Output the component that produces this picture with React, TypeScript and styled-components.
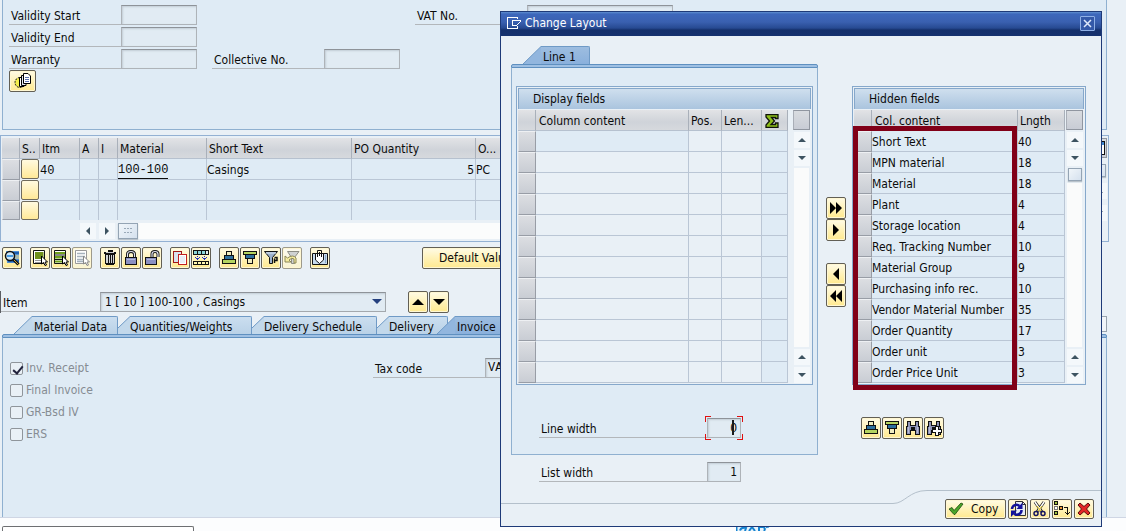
import React from "react";
import styled, { createGlobalStyle, css } from "styled-components";

const GlobalStyle = createGlobalStyle`
  * { box-sizing: border-box; }
  html, body { margin: 0; padding: 0; }
  body { background: #fcfdfe; overflow: hidden; }
  body, button, input, select, table {
    font-family: "DejaVu Sans Condensed", "DejaVu Sans", sans-serif;
    font-size: 12px;
    line-height: 16px;
    color: #0b0b0b;
  }
  button, input, select { margin: 0; padding: 0; border-radius: 0; }
`;

/* ---------- page ---------- */

const Page = styled.main`
  min-height: 100vh;
  display: flex;
  flex-direction: column;
  position: relative;
`;

const Workspace = styled.div`
  flex: 1;
  display: flex;
  flex-direction: column;
  background: #e9f0f6;
  padding-right: 17px;
  border-bottom: 1px solid #cfd6e4;
`;

const HeaderPanel = styled.section`
  min-height: 130px;
  margin: 0 2px 0 2px;
  padding: 5px 6px 0;
  background: #dfebf5;
  border: 1px solid #8fb0d0;
  border-top: 0;
`;

const HeaderGrid = styled.div`
  display: grid;
  grid-template-columns: 188px 188px 258px;
  column-gap: 15px;
  row-gap: 2px;
  margin-bottom: 1px;
`;

const Field = styled.label<{ $column?: number }>`
  display: flex;
  height: 20px;
  ${(p) => p.$column && css`grid-column: ${p.$column};`}
`;

const FieldText = styled.span<{ $width?: number }>`
  width: ${(p) => p.$width ?? 112}px;
  flex: none;
  padding: 3px 0 0 2px;
  border-bottom: 1px solid #b3b7bb;
`;

const TextBox = styled.input<{ $width?: number; $numeric?: boolean }>`
  width: ${(p) => p.$width ?? 76}px;
  height: 20px;
  border: 1px solid #aeb3b8;
  border-top-color: #8e9399;
  background: #e1ebf3;
  box-shadow: inset 1px 1px 2px #c3cdd6;
  padding: 0 2px;
  outline: none;
  ${(p) => p.$numeric && css`text-align: right; padding-right: 3px;`}
`;

const MonoBox = styled(TextBox)`
  font-family: "Liberation Mono", monospace;
`;

const Button = styled.button<{ $width?: number; $height?: number; $muted?: boolean }>`
  display: inline-flex;
  align-items: center;
  justify-content: center;
  flex: none;
  width: ${(p) => p.$width ?? 20}px;
  height: ${(p) => p.$height ?? 22}px;
  border: 1px solid ${(p) => (p.$muted ? "#9d9a8c" : "#625f55")};
  border-radius: 2px;
  background: linear-gradient(#fffbe6, #fff2b8 50%, #ffe98f);
  box-shadow: inset 0 0 0 1px #fff7d2;
  ${(p) => p.$muted && css`background: linear-gradient(#fcfaf0, #f9f3d0);`}
  svg { display: block; flex: none; }
`;

/* ---------- item grid ---------- */

const ItemPanel = styled.section`
  display: flex;
  margin-top: 5px;
  padding: 2px 1px 2px;
  border: 1px solid #93b1d3;
`;

const ItemMain = styled.div`
  flex: 1;
  min-width: 0;
`;

const Grid = styled.table`
  width: 100%;
  table-layout: fixed;
  border-collapse: separate;
  border-spacing: 0;
`;

const Th = styled.th<{ $pad?: number }>`
  height: 21px;
  padding: 2px 0 0 ${(p) => p.$pad ?? 2}px;
  text-align: left;
  font-weight: normal;
  white-space: nowrap;
  overflow: hidden;
  background: linear-gradient(#e2e3e6, #cfd3d9 60%, #d6d9dd);
  border-right: 1px solid #a9b0ba;
  border-bottom: 1px solid #b6c1cf;
  svg { display: block; }
`;

const Td = styled.td<{ $fill?: string; $right?: boolean; $short?: boolean }>`
  height: ${(p) => (p.$short ? 19 : 21)}px;
  padding: ${(p) => (p.$short ? 0 : 2)}px 1px 0 0;
  white-space: nowrap;
  overflow: hidden;
  background: ${(p) => p.$fill ?? "#dfebf5"};
  border-right: 1px solid #bac6d5;
  border-bottom: ${(p) => (p.$short ? "0" : "1px solid #bac6d5")};
  text-align: ${(p) => (p.$right ? "right" : "left")};
`;

const Handle = styled.td`
  padding: 0;
  border: 1px solid #989da6;
  border-top-color: #eef0f3;
  border-left-color: #dfe2e6;
  background: linear-gradient(#dcdee2, #c9cdd4);
`;

const MarkCell = styled.td`
  padding: 0 0 0 1px;
  vertical-align: top;
`;

const Marker = styled.button<{ $short?: boolean }>`
  display: block;
  width: 18px;
  height: ${(p) => (p.$short ? 19 : 20)}px;
  border: 1px solid #6f6b5d;
  border-radius: 2px;
  background: linear-gradient(#fffae0, #ffe998);
`;

const Mono = styled.span`
  font-family: "Liberation Mono", monospace;
`;

const MaterialLink = styled.a`
  display: inline-block;
  line-height: 15px;
  font-family: "Liberation Mono", monospace;
  font-size: 12px;
  color: #0b0b0b;
  text-decoration: none;
  border-bottom: 1px solid #0b0b0b;
`;

const HorizontalScroll = styled.div`
  display: flex;
  gap: 3px;
  height: 16px;
  margin: 3px 0 0 78px;
`;

const ScrollArrow = styled.button`
  display: flex;
  align-items: center;
  justify-content: center;
  flex: none;
  width: 16px;
  height: 16px;
  border: 0;
  background: #f4f8fb;
`;

const ScrollTrack = styled.div`
  flex: 1;
  background: #fbfcfc;
`;

const ScrollThumb = styled.div<{ $width: number; $height: number }>`
  display: flex;
  align-items: center;
  justify-content: center;
  flex: none;
  width: ${(p) => p.$width}px;
  height: ${(p) => p.$height}px;
  border: 1px solid #94a4b4;
  background: linear-gradient(135deg, #f1f6fa, #d5e1ee);
  box-shadow: 0 1px 1px #b9c2ca;
`;

const ConfigButton = styled.button`
  width: 17px;
  height: 20px;
  flex: none;
  display: flex;
  align-items: center;
  justify-content: center;
  border: 1px solid #9096a0;
  border-left-color: #a9aeb7;
  background: linear-gradient(#d9dce0, #c8ccd5);
`;

const VerticalScroll = styled.div<{ $gap?: number }>`
  display: flex;
  flex-direction: column;
  align-items: center;
  flex: none;
  width: 17px;
  gap: ${(p) => p.$gap ?? 2}px;
`;

/* ---------- toolbar and item picker ---------- */

const Toolbar = styled.div`
  display: flex;
  gap: 8px;
  margin: 5px 0 0 2px;
`;

const ButtonGroup = styled.div`
  display: flex;
  gap: 1px;
`;

const WideAction = styled(Button)`
  margin-left: 84px;
`;

const ItemRow = styled.div`
  display: flex;
  align-items: center;
  margin-top: 22px;
  height: 22px;
  border-left: 1px solid #5b5e63;
`;

const SelectWrap = styled.span`
  position: relative;
  width: 286px;
  height: 20px;
  svg { position: absolute; right: 4px; top: 7px; pointer-events: none; }
`;

const Select = styled.select`
  appearance: none;
  width: 100%;
  height: 20px;
  padding: 0 4px;
  border: 1px solid #a3a8ad;
  border-top-color: #8e9399;
  background: #e1ebf3;
  box-shadow: inset 1px 1px 2px #c3cdd6;
`;

const ItemLabel = styled.label`
  display: flex;
  height: 20px;
`;

const StepButtons = styled.div`
  display: flex;
  gap: 1px;
  margin-left: 22px;
`;

/* ---------- tabs ---------- */

const TabStrip = styled.div<{ $indent: number }>`
  display: flex;
  height: 18px;
  padding-left: ${(p) => p.$indent}px;
`;

const TabButton = styled.button<{ $overlap?: boolean }>`
  display: flex;
  height: 18px;
  border: 0;
  background: none;
  position: relative;
  ${(p) => p.$overlap && css`margin-left: -11px;`}
  svg { display: block; flex: none; }
`;

const TabFace = styled.span<{ $active?: boolean; $width: number; $pad?: number }>`
  width: ${(p) => p.$width}px;
  height: 18px;
  padding: 3px 0 0 ${(p) => p.$pad ?? 0}px;
  line-height: 15px;
  text-align: left;
  white-space: nowrap;
  border-top: 1px solid #6f9ac6;
  border-right: 1px solid #6f9ac6;
  border-top-right-radius: 2px;
  background: ${(p) => (p.$active ? "linear-gradient(#9dbde0, #8ab0dc)" : "linear-gradient(#cbdeef, #b9d1e7)")};
`;

const StripEnd = styled.div`
  flex: 1;
  display: flex;
  justify-content: flex-end;
`;

const TabListButton = styled.button`
  width: 16px;
  height: 16px;
  border: 1px solid #98a3ae;
  background: #f1f5f9;
`;

const TabBand = styled.div`
  height: 4px;
  border: 1px solid #5f90c0;
  border-radius: 2px 2px 0 0;
  background: #9fc0e3;
`;

const TabPanel = styled.div`
  flex: 1;
  background: #dfebf5;
  border: 1px solid #8fb0d0;
  border-top: 0;
`;

const TabArea = styled.section`
  flex: 1;
  display: flex;
  flex-direction: column;
  margin: 3px 2px 0 2px;
`;

const InvoicePanel = styled(TabPanel)`
  border-bottom: 0;
  display: grid;
  grid-template-columns: 363px 1fr;
  align-items: start;
  padding: 20px 0 0 7px;
`;

const Checks = styled.div`
  display: flex;
  flex-direction: column;
  gap: 2px;
`;

const CheckLabel = styled.label`
  display: flex;
  align-items: center;
  gap: 3px;
  height: 20px;
  color: #868c93;
`;

const CheckBox = styled.input`
  appearance: none;
  width: 13px;
  height: 13px;
  border: 1px solid #8f959b;
  border-radius: 2px;
  background: #e9f0f6;
  position: relative;
  &:checked::after {
    content: "";
    position: absolute;
    left: 4px;
    top: 1px;
    width: 4px;
    height: 8px;
    border: solid #20213c;
    border-width: 0 2px 2px 0;
    transform: rotate(40deg);
  }
`;

const StatusBar = styled.footer`
  height: 13px;
  display: flex;
  justify-content: space-between;
  align-items: flex-end;
  padding: 0 356px 0 2px;
  overflow: hidden;
`;

const StatusBox = styled.div`
  width: 192px;
  height: 5px;
  border: 1px solid #6d6f72;
  border-bottom: 0;
  border-radius: 2px 2px 0 0;
  background: #fff;
`;

/* ---------- dialog ---------- */

const Dialog = styled.section`
  position: absolute;
  left: 500px;
  top: 11px;
  width: 602px;
  background: #e9f0f6;
  border: 1px solid #1e3a78;
  display: flex;
  flex-direction: column;
`;

const TitleBar = styled.header`
  display: flex;
  align-items: center;
  height: 24px;
  padding: 0 6px 2px 6px;
  gap: 3px;
  background: linear-gradient(#5f8fd0 0, #3d67bb 2px, #3a60b0 10px, #274a92 16px, #15306b 18px, #16326f);
  h1 {
    flex: 1;
    margin: 0;
    font-size: 12px;
    font-weight: normal;
    color: #fff;
  }
`;

const CloseButton = styled.button`
  display: flex;
  align-items: center;
  justify-content: center;
  width: 15px;
  height: 15px;
  border: 1px solid #8fb0e6;
  border-radius: 1px;
  background: #3459a8;
`;

const DialogBody = styled.div`
  display: flex;
  padding: 10px 0 0 10px;
`;

const LineColumn = styled.div`
  width: 307px;
`;

const LinePanel = styled(TabPanel)`
  padding: 18px 4px 16px;
`;

const FieldBox = styled.div`
  border: 1px solid #86a8cb;
  padding: 1px 1px 1px 1px;
  background: #e9f0f6;
`;

const BoxTitle = styled.h2`
  margin: 0;
  height: 21px;
  padding: 3px 0 0 14px;
  font-size: 12px;
  line-height: 15px;
  font-weight: normal;
  border: 1px solid #86a8cb;
  border-bottom: 0;
  background: linear-gradient(#cfdfee, #aac4de);
`;

const BoxContent = styled.div`
  display: flex;
  justify-content: space-between;
  padding: 1px 1px 0 0;
`;

const BoxTable = styled(Grid)<{ $width: number }>`
  width: ${(p) => p.$width}px;
  flex: none;
`;

const Track = styled.div`
  flex: 1;
  width: 15px;
  background: #fafbfb;
`;

const WidthField = styled(Field)<{ $top: number; $indent: number }>`
  margin-top: ${(p) => p.$top}px;
  padding-left: ${(p) => p.$indent}px;
`;

const FocusFrame = styled.span`
  position: relative;
  display: flex;
  > svg { position: absolute; left: -2px; top: -2px; pointer-events: none; }
`;

const MoveColumn = styled.div`
  display: flex;
  flex-direction: column;
  gap: 22px;
  padding-top: 151px;
  margin: 0 6px 0 8px;
`;

const MovePair = styled.div`
  display: flex;
  flex-direction: column;
`;

const HiddenColumn = styled.div`
  width: 234px;
  padding-top: 40px;
`;

const HiddenFrame = styled.div`
  position: relative;
`;

const Highlight = styled.div`
  position: absolute;
  left: 1px;
  top: 40px;
  width: 164px;
  height: 264px;
  border: 5px solid #810018;
  pointer-events: none;
`;

const ListButtons = styled(ButtonGroup)`
  margin: 32px 0 0 9px;
`;

const DialogFooter = styled.footer`
  display: flex;
  margin-top: 8px;
  svg { display: block; }
`;

const FooterLine = styled.div`
  flex: 1;
  margin-top: 13px;
  border-top: 1px solid #b4c0cb;
`;

const FooterButtons = styled.div`
  display: flex;
  gap: 2px;
  height: 36px;
  padding: 8px 7px 0 18px;
  border-top: 1px solid #b4c0cb;
`;

const CopyButton = styled(Button)`
  justify-content: flex-start;
  padding-left: 2px;
  gap: 7px;
`;

/* ---------- icons ---------- */

const Svg = ({ w = 16, h = 16, children, soft }: { w?: number; h?: number; children: React.ReactNode; soft?: boolean }) => (
  <svg width={w} height={h} viewBox={`0 0 ${w} ${h}`} aria-hidden="true" fill="none" shapeRendering={soft ? "auto" : "crispEdges"}>
    {children}
  </svg>
);

const Triangle = ({ dir, color = "#000", size = 5 }: { dir: "up" | "down" | "left" | "right"; color?: string; size?: number }) => {
  const s = size;
  const long = s * 2;
  const d = {
    up: `M0 ${s}L${s} 0L${long} ${s}Z`,
    down: `M0 0L${long} 0L${s} ${s}Z`,
    left: `M${s} 0L${s} ${long}L0 ${s}Z`,
    right: `M0 0L${s} ${s}L0 ${long}Z`,
  }[dir];
  const flat = dir === "up" || dir === "down";
  return <Svg soft w={flat ? long : s} h={flat ? s : long}><path d={d} fill={color} /></Svg>;
};

const DoubleTriangle = ({ dir }: { dir: "left" | "right" }) => (
  <Svg soft w={12} h={12}>
    <path d={dir === "right" ? "M0 0L6 6L0 12ZM6 0L12 6L6 12Z" : "M12 0L6 6L12 12ZM6 0L0 6L6 12Z"} fill="#000" />
  </Svg>
);

const DocumentsIcon = () => (
  <Svg soft w={18}>
    <circle cx="6" cy="9.500" r="5" fill="#f4ee4c" stroke="#111" strokeDasharray="2 1" />
    <path d="M5.500 4.500H10V13.500H5.500Z" fill="#fff" stroke="#000" />
    <path d="M7.500 2.500H12V12.500H7.500Z" fill="#e4e8f4" stroke="#000" />
    <path d="M9.500 .5H14L16.500 3V10.500H9.500Z" fill="#fff" stroke="#000" />
    <path d="M11 4.500H15M11 6.500H15M11 8.500H15" stroke="#5a70b0" />
  </Svg>
);

const DetailIcon = () => (
  <Svg soft>
    <path d="M2 1H15V13H3Z" fill="#4f8fd4" />
    <path d="M4 3H15M4 11H15" stroke="#1e5fae" strokeWidth="2" />
    <path d="M11 6H15M11 8H15" stroke="#ffe68b" />
    <circle cx="6" cy="6" r="4.500" fill="#cfe8f8" stroke="#101010" strokeWidth="1.500" />
    <path d="M3 6H9" stroke="#469be0" strokeWidth="2" />
    <path d="M9.500 9.500L14.500 14.500" stroke="#111" strokeWidth="3" />
    <path d="M10 10L14 14" stroke="#c8a53e" />
  </Svg>
);

const Cursor = ({ pale }: { pale?: boolean }) => (
  <path d="M9.500 6V14L11.500 12.500L13 15.500L14.500 15L13 12H15.500Z" fill="#fff" stroke={pale ? "#888" : "#000"} strokeWidth="1" />
);

const SelectAllIcon = () => (
  <Svg soft>
    <path d="M1.500 .5H12.500V13.500H1.500Z" fill="#fff" stroke="#111" />
    <path d="M3 2H11.500V9H3Z" fill="#70901c" />
    <path d="M3 10.500H10M3 12.500H10" stroke="#999" />
    <Cursor />
  </Svg>
);

const SelectBlockIcon = () => (
  <Svg soft>
    <path d="M1.500 .5H12.500V13.500H1.500Z" fill="#fff" stroke="#111" />
    <path d="M2 2H12V4H2ZM2 6H12V8.500H2ZM2 10.500H12V12.500H2Z" fill="#70a01c" />
    <path d="M2 5H12M2 9.500H12" stroke="#111" />
    <Cursor />
  </Svg>
);

const DeselectIcon = () => (
  <Svg soft>
    <path d="M1.500 .5H12.500V13.500H1.500Z" fill="#fff" stroke="#999" />
    <path d="M3 3.500H11M3 6.500H11M3 9.500H11M3 11.500H11" stroke="#a6b2bd" strokeWidth="1.500" />
    <Cursor pale />
  </Svg>
);

const TrashIcon = () => (
  <Svg>
    <path d="M6 0H11V2H14V4H2V2H6Z" fill="#111" />
    <path d="M4 2H12V3H4Z" fill="#c7c9cd" />
    <path d="M3 4H13V14H12V15H4V14H3Z" fill="#111" />
    <path d="M4 5H6V13H4ZM7 5H8V13H7ZM9 5H10V13H9ZM11 5H12V13H11Z" fill="#d2d4d8" />
  </Svg>
);

const LockIcon = ({ open }: { open?: boolean }) => {
  const shackle = open
    ? "M8 8V4Q8 1.500 11 1.500Q14 1.500 14 4V7"
    : "M4.500 8V4.500Q4.500 1.500 8 1.500Q11.500 1.500 11.500 4.500V8";
  return (
    <Svg soft>
      <path d={shackle} stroke="#111" strokeWidth="3" />
      <path d={shackle} stroke="#dfe2f2" strokeWidth="1.200" />
      <rect x={open ? 1.5 : 2.5} y="7.500" width="11" height="7" fill="#8b90c2" stroke="#111" />
      <path d={open ? "M3 9.500H11" : "M4 9.500H12"} stroke="#b4b9de" />
    </Svg>
  );
};

const CopyIcon = () => (
  <Svg>
    <rect x="1.500" y="1.500" width="8" height="11" fill="#d9e2ef" stroke="#a01818" />
    <rect x="6.500" y="4.500" width="8" height="10" fill="#fff" stroke="#c22020" />
    <path d="M8 6H13V13H8Z" fill="#e8edf5" />
  </Svg>
);

const InsertLinesIcon = () => (
  <Svg>
    <path d="M0 0H16V5H0Z" fill="#111" />
    <path d="M1 1H4V4H1ZM5 1H8V4H5ZM9 1H12V4H9Z" fill="#8dd4d8" />
    <path d="M13 1H15V4H13Z" fill="#e0eef2" />
    <path d="M4 6H5V7H4ZM2 7H3V8H2ZM6 7H7V8H6ZM3 8H6V9H3ZM4 9H5V10H4ZM11 6H12V7H11ZM9 7H10V8H9ZM13 7H14V8H13ZM10 8H13V9H10ZM11 9H12V10H11Z" fill="#2030c0" />
    <path d="M0 11H16V15H0Z" fill="#111" />
    <path d="M1 12H4V14H1ZM5 12H8V14H5ZM9 12H12V14H9ZM13 12H15V14H13Z" fill="#fff6b0" />
  </Svg>
);

const SortIcon = ({ down }: { down?: boolean }) => (
  <Svg>
    {down ? (
      <>
        <path d="M1 1H15V5H13V9H11V14H5V9H3V5H1Z" fill="#111" />
        <path d="M2 2H14V4H2Z" fill="#b4d460" />
        <path d="M4 5H12V8H4Z" fill="#2d6f9e" />
        <path d="M6 9H10V13H6Z" fill="#f0ecc0" />
      </>
    ) : (
      <>
        <path d="M5 1H11V5H13V9H15V14H1V9H3V5H5Z" fill="#111" />
        <path d="M6 2H10V5H6Z" fill="#f0ecc0" />
        <path d="M4 6H12V9H4Z" fill="#2d6f9e" />
        <path d="M2 10H14V13H2Z" fill="#b4d460" />
      </>
    )}
  </Svg>
);

const FilterIcon = () => (
  <Svg soft>
    <path d="M1.500 1.500H14.500L9.500 7.500V13.500H6.500V7.500Z" fill="#9db1cc" stroke="#111" />
    <path d="M3 3H13" stroke="#dbe5f1" />
    <path d="M11.500 13V8.500M11.500 7.500H14V10.500H12" stroke="#111" strokeWidth="1.500" />
  </Svg>
);

const FilterUndoIcon = () => (
  <Svg soft>
    <path d="M3.500 1.500H15L10.500 7.500V13.500H7.500V7.500Z" fill="#cfd2d2" stroke="#8c8c84" />
    <path d="M1 6V12H7L5 10Q8 7 10 9V13H12V8Q9 4 3.500 8Z" fill="#f5eda0" stroke="#8c8757" />
  </Svg>
);

const NotesIcon = () => (
  <Svg soft>
    <path d="M.5 3.500H15.500V14.500H.5Z" fill="#c9dced" stroke="#111" />
    <path d="M3.500 3.500H11.500V10L7.500 13.500L3.500 10Z" fill="#fff" stroke="#111" />
    <path d="M5.500 7V.5H9.500V7M7.500 2V6" stroke="#111" />
    <path d="M13.500 5V13" stroke="#8aa8c8" />
  </Svg>
);

const BinocularsIcon = ({ plus }: { plus?: boolean }) => (
  <Svg>
    <path d="M2 1H6V5H10V1H14V6H15V15H10V11H6V15H1V6H2Z" fill="#111" />
    <path d="M3 2H5V6H11V2H13V7H14V14H11V10H10V7H6V10H5V14H2V7H3Z" fill="#8f94b8" />
    <path d="M3 7H4V13H3ZM12 7H13V13H12Z" fill="#b9bddb" />
    {plus && <path d="M9.500 6.500H12.500V9.500H15.500V12.500H12.500V15.500H9.500V12.500H6.500V9.500H9.500Z" fill="#fff" stroke="#111" />}
  </Svg>
);

const SigmaIcon = () => (
  <Svg soft w={14} h={14}>
    <path d="M1 .5H13V4.500H10.500V3.500H6.500L9.500 7L6 10.500H10.500V9H13V13.500H1V11L4.500 7L1 3Z" fill="#8fc01a" stroke="#10140a" strokeWidth="1.300" />
  </Svg>
);

const CheckIcon = () => (
  <Svg soft>
    <path d="M1 8L4 6.500L6 9.500L13 2L15 3L7 13.500H6Z" fill="#4ba62a" stroke="#1c4a0e" strokeWidth=".8" />
  </Svg>
);

const RefreshIcon = () => (
  <Svg soft>
    <path d="M5.500 .5H12.500L15.500 3.500V14.500H5.500Z" fill="#e6edf6" stroke="#333" />
    <path d="M12.500 .5V3.500H15.500" stroke="#333" />
    <path d="M2 8A4.500 4.500 0 0 1 9.500 5M11.500 9A4.500 4.500 0 0 1 4 12.500" stroke="#12129a" strokeWidth="2.500" />
    <path d="M12.500 1.500V8H6.500Z" fill="#12129a" />
    <path d="M1 16V9.500H7Z" fill="#12129a" />
  </Svg>
);

const ScissorsIcon = () => (
  <Svg soft>
    <path d="M3 1L10 11M12 1L5 11" stroke="#222" strokeWidth="3" />
    <path d="M3 1L9 10M12 1L6 10" stroke="#fff" strokeWidth="1.500" />
    <path d="M5 5L9 10M10 5L6 10" stroke="#e4c51c" />
    <circle cx="4" cy="12.500" r="2" stroke="#161660" strokeWidth="1.500" />
    <circle cx="11" cy="12.500" r="2" stroke="#161660" strokeWidth="1.500" />
  </Svg>
);

const TransferIcon = () => (
  <Svg>
    <rect x=".5" y=".5" width="3" height="3" fill="#9ec33c" stroke="#111" />
    <rect x=".5" y="5.500" width="3" height="3" fill="#fff" stroke="#777" />
    <rect x=".5" y="10.500" width="3" height="3" fill="#9ec33c" stroke="#111" />
    <rect x="5.500" y="5.500" width="3" height="3" fill="#f29b38" stroke="#111" />
    <path d="M10 6.500H13.500V14M11 11.500H12M12 12.500H15M15 11.500H16" stroke="#111" />
  </Svg>
);

const CancelIcon = () => (
  <Svg soft w={14} h={14}>
    <path d="M1 3L3 1L7 4.500L11 1L13 3L9.500 7L13 11L11 13L7 9.500L3 13L1 11L4.500 7Z" fill="#e32626" stroke="#5c0c0c" />
  </Svg>
);

const WindowIcon = () => (
  <Svg w={15} h={12}>
    <path d="M10.500 2V.5H.5V11.500H10.500V9" stroke="#fff" />
    <path d="M14 3.500H5.500V8.500H10M13 4.500H14M12 5.500H13M11 6.500H12M10 7.500H11" stroke="#fff" />
  </Svg>
);

const CloseIcon = () => (
  <Svg soft w={9} h={9}>
    <path d="M1 1L8 8M8 1L1 8" stroke="#dfe9fb" strokeWidth="1.500" />
  </Svg>
);

const FocusCorners = () => (
  <Svg w={38} h={24}>
    <path d="M.5 6V.5H6M32 .5H37.500V6M37.500 18V23.500H32M6 23.500H.5V18" stroke="#e01010" />
    <path d="M27 4H29V19H27Z" fill="#1a1a1a" />
  </Svg>
);

const GripIcon = () => (
  <Svg w={8} h={6}>
    <path d="M0 .5H2M3 .5H5M6 .5H8M0 4.500H2M3 4.500H5M6 4.500H8" stroke="#9aa9b8" />
  </Svg>
);

const ConfigIcon = () => (
  <Svg w={13} h={14}>
    <rect x=".5" y=".5" width="12" height="13" fill="#fff" stroke="#111" />
    <path d="M1 1H12V4H1Z" fill="#3f86cf" />
    <path d="M4.500 4V13M8.500 4V13" stroke="#8b949e" />
  </Svg>
);

const Logo = () => (
  <Svg soft w={34} h={5}>
    <path d="M0 0H34L29 5H0Z" fill="#e8f4fc" />
    <path d="M.5 5V.5M4 4.500Q5 1 10 2L9 5M13 5L16 1L19 5M23 5V1H27Q30 2 28 5M30 1L33 .5" stroke="#1583d0" strokeWidth="2" />
  </Svg>
);

const Slant = ({ width, active }: { width: number; active?: boolean }) => {
  const drop = Math.min(width, 18);
  return (
    <Svg soft w={width} h={18}>
      <path d={`M0 18V${drop}L${width} .5V18Z`} fill={active ? "#92b6de" : "#c2d8eb"} />
      <path d={`M0 ${drop}L${width} .5`} stroke="#6f9ac6" />
    </Svg>
  );
};

/* ---------- parts ---------- */

type TabProps = { label: string; slant: number; width: number; pad?: number; active?: boolean; overlap?: boolean };

const Tab = ({ label, slant, width, pad, active, overlap }: TabProps) => (
  <TabButton type="button" role="tab" aria-selected={!!active} $overlap={overlap}>
    <Slant width={slant} active={active} />
    <TabFace $width={width} $pad={pad} $active={active}>{label}</TabFace>
  </TabButton>
);

const Arrow = ({ dir, label }: { dir: "up" | "down" | "left" | "right"; label: string }) => (
  <ScrollArrow type="button" aria-label={label}><Triangle dir={dir} size={4} color="#3d5361" /></ScrollArrow>
);

const FieldScroll = ({ thumb }: { thumb?: boolean }) => (
  <VerticalScroll>
    <ConfigButton type="button" aria-label="Configure columns" />
    <Arrow dir="up" label="First" />
    <Arrow dir="down" label="Page down" />
    {thumb && <ScrollThumb $width={14} $height={13} />}
    <Track />
    <Arrow dir="up" label="Page up" />
    <Arrow dir="down" label="Last" />
  </VerticalScroll>
);

const ItemScroll = () => (
  <VerticalScroll $gap={6}>
    <ConfigButton type="button" aria-label="Configure columns"><ConfigIcon /></ConfigButton>
    <ScrollThumb $width={15} $height={13} />
    <Arrow dir="up" label="Page up" />
    <Arrow dir="down" label="Page down" />
  </VerticalScroll>
);

const toolbarGroups: { label: string; icon: React.ReactNode; muted?: boolean }[][] = [
  [{ label: "Details", icon: <DetailIcon /> }],
  [
    { label: "Select all", icon: <SelectAllIcon /> },
    { label: "Select block", icon: <SelectBlockIcon /> },
    { label: "Deselect all", icon: <DeselectIcon />, muted: true },
  ],
  [
    { label: "Delete", icon: <TrashIcon /> },
    { label: "Lock", icon: <LockIcon /> },
    { label: "Unlock", icon: <LockIcon open /> },
  ],
  [
    { label: "Copy item", icon: <CopyIcon /> },
    { label: "Insert lines", icon: <InsertLinesIcon /> },
  ],
  [
    { label: "Sort ascending", icon: <SortIcon /> },
    { label: "Sort descending", icon: <SortIcon down /> },
    { label: "Filter", icon: <FilterIcon /> },
    { label: "Remove filter", icon: <FilterUndoIcon />, muted: true },
  ],
  [{ label: "Notes", icon: <NotesIcon /> }],
];

const hiddenFields: [string, number][] = [
  ["Short Text", 40],
  ["MPN material", 18],
  ["Material", 18],
  ["Plant", 4],
  ["Storage location", 4],
  ["Req. Tracking Number", 10],
  ["Material Group", 9],
  ["Purchasing info rec.", 10],
  ["Vendor Material Number", 35],
  ["Order Quantity", 17],
  ["Order unit", 3],
  ["Order Price Unit", 3],
];

const Columns = ({ widths, fluid }: { widths: number[]; fluid?: boolean }) => (
  <colgroup>
    {widths.map((w, i) => <col key={i} width={w} />)}
    {fluid && <col />}
  </colgroup>
);

const PurchaseOrder = () => (
  <Workspace>
    <HeaderPanel>
      <HeaderGrid>
        <Field><FieldText>Validity Start</FieldText><TextBox /></Field>
        <Field $column={3}><FieldText>VAT No.</FieldText><TextBox $width={146} /></Field>
        <Field $column={1}><FieldText>Validity End</FieldText><TextBox /></Field>
        <Field $column={1}><FieldText>Warranty</FieldText><TextBox /></Field>
        <Field><FieldText>Collective No.</FieldText><TextBox /></Field>
      </HeaderGrid>
      <Button type="button" $width={27} aria-label="Texts"><DocumentsIcon /></Button>
    </HeaderPanel>

    <ItemPanel>
      <ItemMain>
        <Grid>
          <Columns widths={[18, 20, 40, 19, 19, 89, 145, 124, 30]} fluid />
          <thead>
            <tr>
              <Th />
              <Th>S..</Th>
              <Th>Itm</Th>
              <Th>A</Th>
              <Th>I</Th>
              <Th>Material</Th>
              <Th>Short Text</Th>
              <Th>PO Quantity</Th>
              <Th>O...</Th>
              <Th />
            </tr>
          </thead>
          <tbody>
            <tr>
              <Handle />
              <MarkCell><Marker type="button" aria-label="Status of item 40" /></MarkCell>
              <Td><Mono>40</Mono></Td>
              <Td /><Td />
              <Td><MaterialLink href="#material">100-100</MaterialLink></Td>
              <Td>Casings</Td>
              <Td $right>5</Td>
              <Td>PC</Td>
              <Td />
            </tr>
            {[false, true].map((short, i) => (
              <tr key={i}>
                <Handle />
                <MarkCell><Marker type="button" aria-label="Status" $short={short} /></MarkCell>
                {Array.from({ length: 8 }, (_, c) => <Td key={c} $short={short} />)}
              </tr>
            ))}
          </tbody>
        </Grid>
        <HorizontalScroll>
          <Arrow dir="left" label="Scroll left" />
          <Arrow dir="right" label="Scroll right" />
          <ScrollTrack><ScrollThumb $width={20} $height={16}><GripIcon /></ScrollThumb></ScrollTrack>
        </HorizontalScroll>
      </ItemMain>
      <ItemScroll />
    </ItemPanel>

    <Toolbar>
      {toolbarGroups.map((group, i) => (
        <ButtonGroup key={i}>
          {group.map((b) => (
            <Button key={b.label} type="button" aria-label={b.label} $muted={b.muted}>{b.icon}</Button>
          ))}
        </ButtonGroup>
      ))}
      <WideAction type="button" $width={112}>Default Values</WideAction>
    </Toolbar>

    <ItemRow>
      <ItemLabel>
        <FieldText $width={99}>Item</FieldText>
        <SelectWrap>
          <Select><option>1 [ 10 ] 100-100 , Casings</option></Select>
          <Triangle dir="down" color="#24407e" />
        </SelectWrap>
      </ItemLabel>
      <StepButtons>
        <Button type="button" aria-label="Previous item"><Triangle dir="up" size={6} /></Button>
        <Button type="button" aria-label="Next item"><Triangle dir="down" size={6} /></Button>
      </StepButtons>
    </ItemRow>

    <TabArea>
      <TabStrip $indent={12} role="tablist">
        <Tab label="Material Data" slant={18} width={86} pad={2} />
        <Tab label="Quantities/Weights" slant={12} width={122} />
        <Tab label="Delivery Schedule" slant={12} width={113} />
        <Tab label="Delivery" slant={12} width={59} />
        <Tab label="Invoice" slant={18} width={80} pad={2} active overlap />
        <StripEnd><TabListButton type="button" aria-label="All tabs" /></StripEnd>
      </TabStrip>
      <TabBand />
      <InvoicePanel>
        <Checks>
          <CheckLabel><CheckBox type="checkbox" defaultChecked disabled />Inv. Receipt</CheckLabel>
          <CheckLabel><CheckBox type="checkbox" disabled />Final Invoice</CheckLabel>
          <CheckLabel><CheckBox type="checkbox" disabled />GR-Bsd IV</CheckLabel>
          <CheckLabel><CheckBox type="checkbox" disabled />ERS</CheckLabel>
        </Checks>
        <Field><FieldText>Tax code</FieldText><MonoBox $width={40} defaultValue="VA" /></Field>
      </InvoicePanel>
    </TabArea>
  </Workspace>
);

const ChangeLayout = () => (
  <Dialog role="dialog" aria-label="Change Layout">
    <TitleBar>
      <WindowIcon />
      <h1>Change Layout</h1>
      <CloseButton type="button" aria-label="Close"><CloseIcon /></CloseButton>
    </TitleBar>

    <DialogBody>
      <LineColumn>
        <TabStrip $indent={12} role="tablist">
          <Tab label="Line 1" slant={18} width={49} pad={2} active />
        </TabStrip>
        <TabBand />
        <LinePanel>
          <FieldBox>
            <BoxTitle>Display fields</BoxTitle>
            <BoxContent>
              <BoxTable $width={270}>
                <Columns widths={[18, 153, 33, 40, 26]} />
                <thead>
                  <tr>
                    <Th />
                    <Th $pad={3}>Column content</Th>
                    <Th>Pos.</Th>
                    <Th>Len...</Th>
                    <Th $pad={3} aria-label="Total"><SigmaIcon /></Th>
                  </tr>
                </thead>
                <tbody>
                  {Array.from({ length: 12 }, (_, r) => (
                    <tr key={r}>
                      <Handle />
                      <Td $fill={r === 0 ? undefined : "#e9f0f6"} />
                      <Td $fill="#e9f0f6" />
                      <Td $fill="#e9f0f6" />
                      <Td />
                    </tr>
                  ))}
                </tbody>
              </BoxTable>
              <FieldScroll />
            </BoxContent>
          </FieldBox>
          <WidthField $top={33} $indent={23}>
            <FieldText $width={168}>Line width</FieldText>
            <FocusFrame>
              <TextBox $width={34} $numeric defaultValue="0" />
              <FocusCorners />
            </FocusFrame>
          </WidthField>
        </LinePanel>
        <WidthField $top={7} $indent={28}>
          <FieldText $width={168}>List width</FieldText>
          <TextBox $width={34} $numeric defaultValue="1" />
        </WidthField>
      </LineColumn>

      <MoveColumn>
        <MovePair>
          <Button type="button" aria-label="Hide all fields"><DoubleTriangle dir="right" /></Button>
          <Button type="button" aria-label="Hide field"><Triangle dir="right" size={6} /></Button>
        </MovePair>
        <MovePair>
          <Button type="button" aria-label="Show field"><Triangle dir="left" size={6} /></Button>
          <Button type="button" aria-label="Show all fields"><DoubleTriangle dir="left" /></Button>
        </MovePair>
      </MoveColumn>

      <HiddenColumn>
        <HiddenFrame>
          <FieldBox>
            <BoxTitle>Hidden fields</BoxTitle>
            <BoxContent>
              <BoxTable $width={211}>
                <Columns widths={[18, 146, 47]} />
                <thead>
                  <tr>
                    <Th />
                    <Th $pad={3}>Col. content</Th>
                    <Th>Lngth</Th>
                  </tr>
                </thead>
                <tbody>
                  {hiddenFields.map(([name, length]) => (
                    <tr key={name}>
                      <Handle />
                      <Td>{name}</Td>
                      <Td>{length}</Td>
                    </tr>
                  ))}
                </tbody>
              </BoxTable>
              <FieldScroll thumb />
            </BoxContent>
          </FieldBox>
          <Highlight />
        </HiddenFrame>
        <ListButtons>
          <Button type="button" aria-label="Sort ascending"><SortIcon /></Button>
          <Button type="button" aria-label="Sort descending"><SortIcon down /></Button>
          <Button type="button" aria-label="Find"><BinocularsIcon /></Button>
          <Button type="button" aria-label="Find next"><BinocularsIcon plus /></Button>
        </ListButtons>
      </HiddenColumn>
    </DialogBody>

    <DialogFooter>
      <FooterLine />
      <Svg soft w={34} h={35}>
        <path d="M0 13.500C12 13.500 16 .5 34 .5" stroke="#b4c0cb" />
      </Svg>
      <FooterButtons>
        <CopyButton type="button" $width={61} $height={20}><CheckIcon />Copy</CopyButton>
        <Button type="button" $height={20} aria-label="Refresh"><RefreshIcon /></Button>
        <Button type="button" $height={20} aria-label="Cut"><ScissorsIcon /></Button>
        <Button type="button" $height={20} aria-label="Transfer"><TransferIcon /></Button>
        <Button type="button" $height={20} aria-label="Cancel"><CancelIcon /></Button>
      </FooterButtons>
    </DialogFooter>
  </Dialog>
);

export default function App() {
  return (
    <Page>
      <GlobalStyle />
      <PurchaseOrder />
      <StatusBar>
        <StatusBox />
        <Logo />
      </StatusBar>
      <ChangeLayout />
    </Page>
  );
}
